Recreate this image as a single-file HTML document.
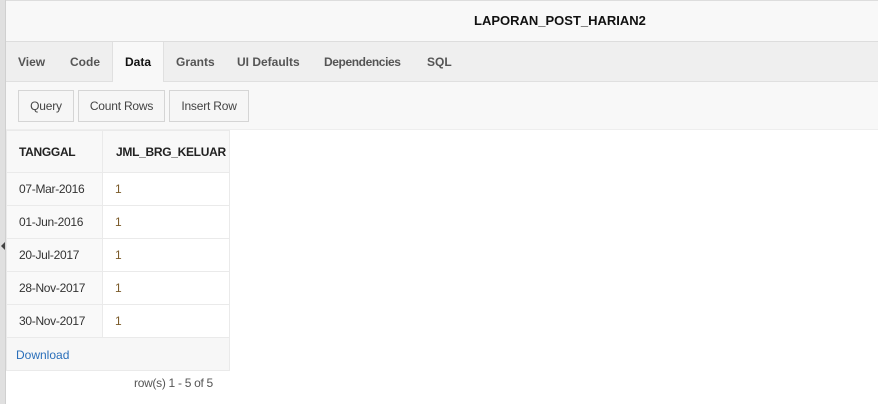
<!DOCTYPE html>
<html><head><style>
*{margin:0;padding:0;box-sizing:border-box}
body{width:878px;height:404px;overflow:hidden;background:#fff;font-family:"Liberation Sans",sans-serif;font-size:12px;color:#333;position:relative}
.lbar{position:absolute;left:0;top:0;width:6px;height:404px;background:#e0e0e0;border-right:1px solid #d0d0d0}
.arrow{position:absolute;left:1px;top:242px;width:0;height:0;border-top:4px solid transparent;border-bottom:4px solid transparent;border-right:4px solid #444}
.hdr{position:absolute;left:6px;top:0;right:0;height:42px;background:#f8f8f8;border-top:1px solid #ddd;border-bottom:1px solid #ddd}
.hdr b{position:absolute;left:468px;top:12px;font-size:13px;color:#111}
.tabs{position:absolute;left:6px;top:42px;right:0;height:40px;background:#efefef;border-bottom:1px solid #e0e0e0}
.tab{position:absolute;top:0;height:40px;line-height:40px;font-weight:bold;color:#555;font-size:12px}
.tab.on{background:#f8f8f8;color:#111;height:41px;border-left:1px solid #e0e0e0;border-right:1px solid #e0e0e0;text-align:center}
.tb{position:absolute;left:6px;top:82px;right:0;height:48px;background:#f8f8f8;border-bottom:1px solid #eee}
.btn{position:absolute;top:8px;height:32px;line-height:30px;border:1px solid #d5d5d5;background:#f6f6f6;text-align:center;color:#444;font-size:12px;letter-spacing:-0.2px}
table{position:absolute;left:6px;top:130px;border-collapse:collapse;width:223px;table-layout:fixed}
td,th{border:1px solid #eaeaea;height:33px;padding-left:12px;text-align:left;font-size:12px;white-space:nowrap;overflow:hidden}
th{height:42px;background:#f8f8f8;color:#222;font-weight:bold;letter-spacing:-0.3px}
td.a{background:#f9f9f9;letter-spacing:-0.3px}
td.n{color:#7a5a2a}
.dl{position:absolute;left:6px;top:337px;width:224px;height:34px;background:#f7f7f7;border:1px solid #eaeaea;color:#2a6fba;padding:10px 0 0 9px;font-size:12px}
.rc{position:absolute;left:134px;top:376px;color:#555;font-size:12px;letter-spacing:-0.3px}
</style></head><body>
<div class="lbar"></div><div class="arrow"></div>
<div class="hdr"><b>LAPORAN_POST_HARIAN2</b></div>
<div class="tabs">
<span class="tab" style="left:12px">View</span>
<span class="tab" style="left:64px">Code</span>
<span class="tab on" style="left:106px;width:52px">Data</span>
<span class="tab" style="left:170px">Grants</span>
<span class="tab" style="left:231px">UI Defaults</span>
<span class="tab" style="left:318px;letter-spacing:-0.4px">Dependencies</span>
<span class="tab" style="left:421px">SQL</span>
</div>
<div class="tb">
<div class="btn" style="left:12px;width:56px">Query</div>
<div class="btn" style="left:72px;width:87px">Count Rows</div>
<div class="btn" style="left:163px;width:80px">Insert Row</div>
</div>
<table>
<colgroup><col style="width:96px"><col style="width:127px"></colgroup>
<tr><th>TANGGAL</th><th style="padding-left:13px">JML_BRG_KELUAR</th></tr>
<tr><td class="a">07-Mar-2016</td><td class="n">1</td></tr>
<tr><td class="a">01-Jun-2016</td><td class="n">1</td></tr>
<tr><td class="a">20-Jul-2017</td><td class="n">1</td></tr>
<tr><td class="a">28-Nov-2017</td><td class="n">1</td></tr>
<tr><td class="a">30-Nov-2017</td><td class="n">1</td></tr>
</table>
<div class="dl">Download</div>
<div class="rc">row(s) 1 - 5 of 5</div>
</body></html>
